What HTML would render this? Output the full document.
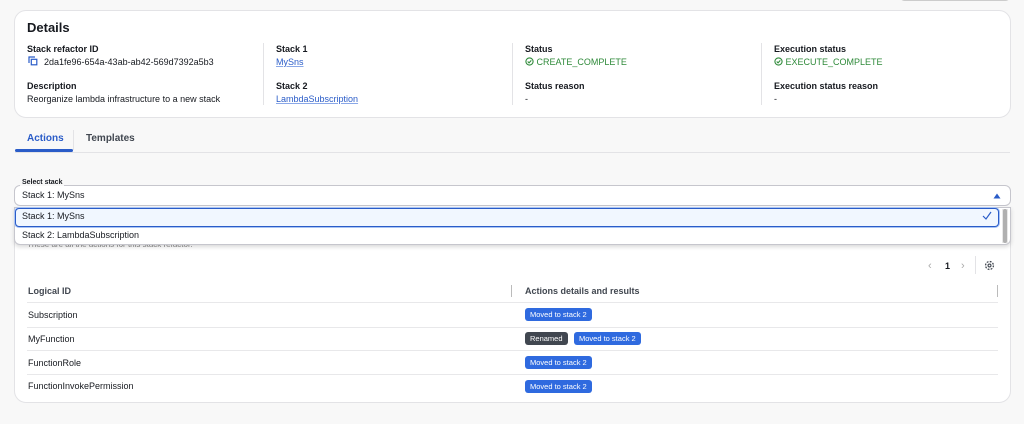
<!DOCTYPE html>
<html><head><meta charset="utf-8"><style>
*{box-sizing:border-box;margin:0;padding:0}
body{width:1024px;height:424px;background:#f8f8f8;font-family:"Liberation Sans",Arial,sans-serif;color:#16191f;position:relative;overflow:hidden;font-size:9px}
.a{position:absolute;white-space:nowrap}
.card{position:absolute;background:#fff;border:1px solid #e3e3e6;border-radius:12px}
.b{font-weight:bold}
.lnk{color:#2a5cc8;text-decoration:underline;text-decoration-color:#8aa8e8}
.ok{color:#2f8a3a}
.vd{position:absolute;width:1px;background:#e3e3e6}
.hl{position:absolute;height:1px;background:#e8e8ea}
.bd{position:absolute;height:13px;border-radius:3px;background:#2f6adf;color:#fff;font-size:7.5px;line-height:13px;padding:0 5px}
</style></head><body>
<div class="a" style="left:900px;top:-8px;width:110px;height:9px;border:1px solid #ccc;border-radius:6px;background:#fff"></div>
<div class="card" style="left:14px;top:10px;width:997px;height:108px"></div>
<div class="a b" style="left:27px;top:20px;font-size:13px">Details</div>
<div class="vd" style="left:263px;top:43px;height:62px"></div>
<div class="vd" style="left:512px;top:43px;height:62px"></div>
<div class="vd" style="left:761px;top:43px;height:62px"></div>
<div class="a b" style="left:27px;top:44px">Stack refactor ID</div>
<svg class="a" style="left:28px;top:56px" width="10" height="10" viewBox="0 0 10 10"><path d="M1 7V1h6" fill="none" stroke="#2a5cc8" stroke-width="1.2"/><rect x="3.3" y="3.3" width="5.5" height="5.5" fill="none" stroke="#2a5cc8" stroke-width="1.2"/></svg>
<div class="a" style="left:44px;top:57px">2da1fe96-654a-43ab-ab42-569d7392a5b3</div>
<div class="a b" style="left:27px;top:81px">Description</div>
<div class="a" style="left:27px;top:94px">Reorganize lambda infrastructure to a new stack</div>
<div class="a b" style="left:276px;top:44px">Stack 1</div>
<div class="a lnk" style="left:276px;top:57px">MySns</div>
<div class="a b" style="left:276px;top:81px">Stack 2</div>
<div class="a lnk" style="left:276px;top:94px">LambdaSubscription</div>
<div class="a b" style="left:525px;top:44px">Status</div>
<div class="a ok" style="left:525px;top:57px"><svg width="9" height="9" viewBox="0 0 10 10" style="vertical-align:-1px"><circle cx="5" cy="5" r="4" fill="none" stroke="#2f8a3a" stroke-width="1.2"/><path d="M3 5l1.5 1.5L7 3.8" fill="none" stroke="#2f8a3a" stroke-width="1.2"/></svg> CREATE_COMPLETE</div>
<div class="a b" style="left:525px;top:81px">Status reason</div>
<div class="a" style="left:525px;top:94px">-</div>
<div class="a b" style="left:774px;top:44px">Execution status</div>
<div class="a ok" style="left:774px;top:57px"><svg width="9" height="9" viewBox="0 0 10 10" style="vertical-align:-1px"><circle cx="5" cy="5" r="4" fill="none" stroke="#2f8a3a" stroke-width="1.2"/><path d="M3 5l1.5 1.5L7 3.8" fill="none" stroke="#2f8a3a" stroke-width="1.2"/></svg> EXECUTE_COMPLETE</div>
<div class="a b" style="left:774px;top:81px">Execution status reason</div>
<div class="a" style="left:774px;top:94px">-</div>
<div class="a b" style="left:27px;top:133px;font-size:10px;color:#2a5cc8">Actions</div>
<div class="a b" style="left:86px;top:133px;font-size:10px;color:#414750">Templates</div>
<div class="vd" style="left:73px;top:130px;height:20px"></div>
<div class="hl" style="left:15px;top:152px;width:995px;background:#e3e3e6"></div>
<div class="a" style="left:15px;top:149px;width:58px;height:3px;background:#2a5cc8;border-radius:2px"></div>
<div class="card" style="left:14px;top:215px;width:997px;height:188px"></div>
<div class="a" style="left:27px;top:240px;color:#888;font-size:8px">These are all the actions for this stack refactor.</div>
<div class="a" style="left:928px;top:260px;color:#aaa;font-size:11px">&#8249;</div>
<div class="a b" style="left:945px;top:261px">1</div>
<div class="a" style="left:961px;top:260px;color:#aaa;font-size:11px">&#8250;</div>
<div class="vd" style="left:975px;top:256px;height:18px"></div>
<svg class="a" style="left:984px;top:260px" width="11" height="11" viewBox="0 0 12 12"><circle cx="6" cy="6" r="4.3" fill="none" stroke="#414750" stroke-width="1.4" stroke-dasharray="2 1.4"/><circle cx="6" cy="6" r="1.6" fill="none" stroke="#414750" stroke-width="1.2"/></svg>
<div class="a b" style="left:28px;top:286px;color:#414750">Logical ID</div>
<div class="a b" style="left:525px;top:286px;color:#414750">Actions details and results</div>
<div class="vd" style="left:511px;top:285px;height:12px;background:#bbb"></div>
<div class="vd" style="left:997px;top:285px;height:12px;background:#bbb"></div>
<div class="hl" style="left:27px;top:302px;width:971px"></div>
<div class="hl" style="left:27px;top:327px;width:971px"></div>
<div class="hl" style="left:27px;top:350px;width:971px"></div>
<div class="hl" style="left:27px;top:374px;width:971px"></div>
<div class="a" style="left:28px;top:310px">Subscription</div>
<div class="a" style="left:28px;top:334px">MyFunction</div>
<div class="a" style="left:28px;top:358px">FunctionRole</div>
<div class="a" style="left:28px;top:381px">FunctionInvokePermission</div>
<div class="bd" style="left:525px;top:308px">Moved to stack 2</div>
<div class="bd" style="left:525px;top:332px;background:#414750">Renamed</div>
<div class="bd" style="left:574px;top:332px">Moved to stack 2</div>
<div class="bd" style="left:525px;top:356px">Moved to stack 2</div>
<div class="bd" style="left:525px;top:380px">Moved to stack 2</div>
<div class="a" style="left:14px;top:185px;width:997px;height:21px;background:#fff;border:1px solid #c6c6cd;border-radius:6px"></div>
<div class="a b" style="left:20px;top:179px;font-size:7px;background:#f8f8f8;padding:0 2px">Select stack</div>
<div class="a" style="left:22px;top:190px">Stack 1: MySns</div>
<svg class="a" style="left:993px;top:193px" width="8" height="6" viewBox="0 0 8 6"><path d="M0.5 5.5L4 0.5L7.5 5.5Z" fill="#2a5cc8"/></svg>
<div class="a" style="left:14px;top:207px;width:997px;height:38px;background:#fff;border:1px solid #c6c6cd;border-radius:0 0 6px 6px;box-shadow:0 2px 4px rgba(0,0,0,.15)"></div>
<div class="a" style="left:15px;top:208px;width:984px;height:19px;background:#f1f7ff;border:1px solid #2a5cc8;border-radius:4px;box-shadow:0 0 0 1px #a9c4f5"></div>
<div class="a" style="left:22px;top:211px">Stack 1: MySns</div>
<svg class="a" style="left:982px;top:211px" width="10" height="9" viewBox="0 0 10 9"><path d="M1 5l3 3 5-7" fill="none" stroke="#2a5cc8" stroke-width="1.2"/></svg>
<div class="a" style="left:22px;top:230px">Stack 2: LambdaSubscription</div>
<div class="a" style="left:1002px;top:209px;width:6px;height:34px;background:#e8e8e8"></div>
<div class="a" style="left:1003px;top:209px;width:4px;height:34px;background:#b0b0b0;border-radius:2px"></div>
</body></html>
